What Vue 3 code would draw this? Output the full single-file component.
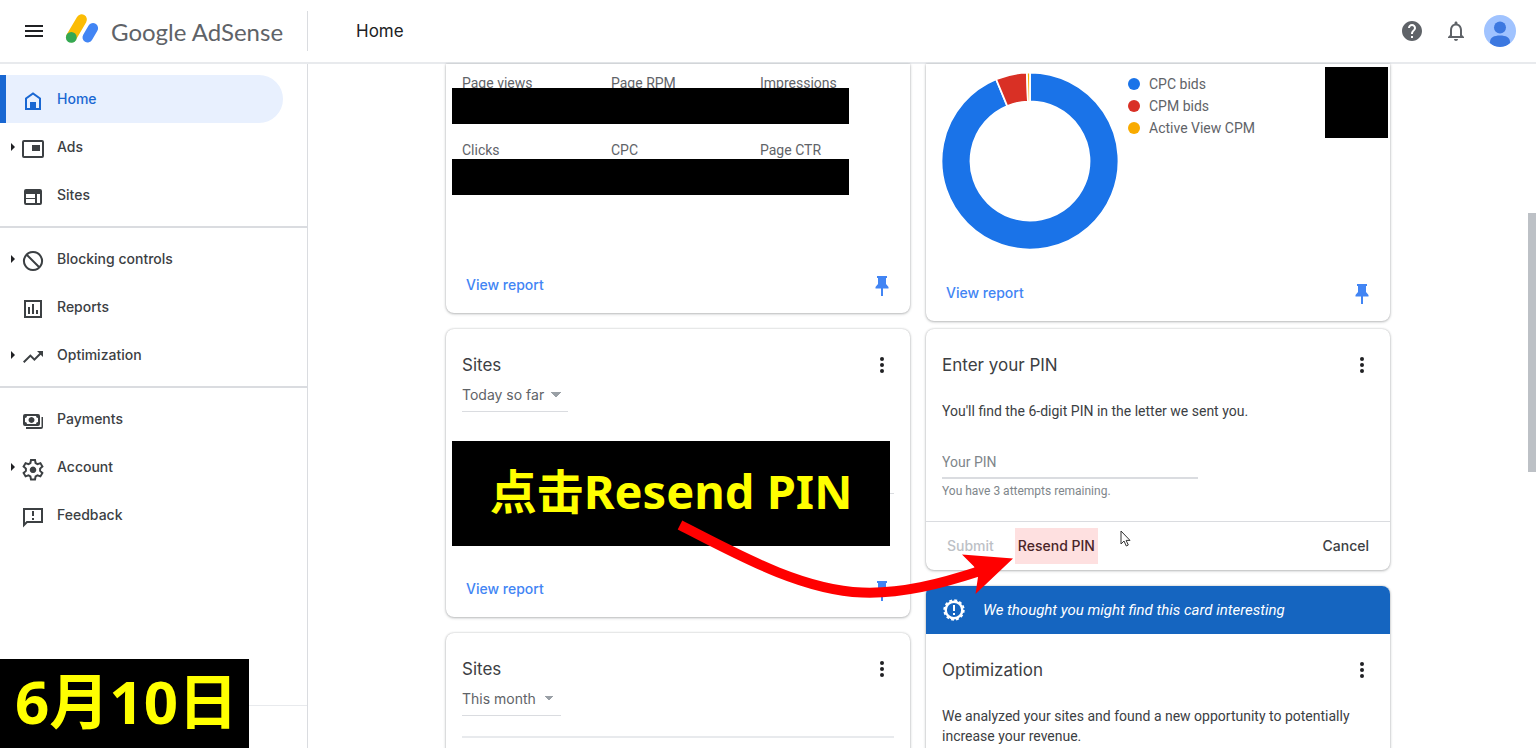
<template>
  <div class="app">
    <header class="topbar">
      <div class="brand">
        <button class="icon-btn" type="button" aria-label="Main menu">
          <svg width="24" height="24" viewBox="0 0 24 24">
            <path d="M3 6h18v2H3zm0 5h18v2H3zm0 5h18v2H3z" fill="#202124" />
          </svg>
        </button>
        <svg class="logo" width="34" height="32" viewBox="0 0 34 32">
          <path d="M5.400 22 15.600 4.600" stroke="#fbbc04" stroke-width="10.600" stroke-linecap="round" />
          <path d="M21.600 22.400 27 13.200" stroke="#4285f4" stroke-width="10.200" stroke-linecap="round" />
          <circle cx="5.300" cy="22.400" r="5.400" fill="#34a853" />
        </svg>
        <span class="brand-name">Google AdSense</span>
      </div>
      <h1>Home</h1>
      <div class="tools">
        <button class="icon-btn" type="button" aria-label="Help">
          <svg width="24" height="24" viewBox="0 0 24 24" fill="#5f6368">
            <path d="M12 2C6.480 2 2 6.480 2 12s4.480 10 10 10 10-4.480 10-10S17.520 2 12 2zm1 17h-2v-2h2v2zm2.070-7.750l-.9.920C13.450 12.900 13 13.500 13 15h-2v-.5c0-1.100.450-2.100 1.170-2.830l1.240-1.260c.370-.360.590-.860.590-1.410 0-1.100-.9-2-2-2s-2 .9-2 2H8c0-2.210 1.790-4 4-4s4 1.790 4 4c0 .880-.360 1.680-.930 2.250z" />
          </svg>
        </button>
        <button class="icon-btn bell" type="button" aria-label="Notifications">
          <svg width="24" height="24" viewBox="0 0 24 24" fill="#5f6368">
            <path d="M12 22c1.100 0 2-.9 2-2h-4c0 1.100.9 2 2 2zm6-6v-5c0-3.070-1.630-5.640-4.500-6.320V4c0-.830-.670-1.500-1.500-1.500s-1.500.670-1.500 1.500v.680C7.640 5.360 6 7.920 6 11v5l-2 2v1h16v-1l-2-2zm-2 1H8v-6c0-2.480 1.510-4.500 4-4.500s4 2.020 4 4.500v6z" />
          </svg>
        </button>
        <button class="icon-btn" type="button" aria-label="Profile">
          <svg width="32" height="32" viewBox="0 0 32 32">
            <clipPath id="face"><circle cx="16" cy="16" r="16" /></clipPath>
            <g clip-path="url(#face)">
              <rect width="32" height="32" fill="#a0c3ff" />
              <circle cx="16" cy="12.500" r="6" fill="#3c78e0" />
              <path d="M6 27c0-4.500 4-6.500 10-6.500S26 22.500 26 27v1c-3 3-6 4-10 4s-7-1-10-4z" fill="#3c78e0" />
            </g>
          </svg>
        </button>
      </div>
    </header>

    <div class="body">
      <nav class="sidebar">
        <ul v-for="(group, i) in menu" :key="i">
          <li v-for="item in group" :key="item.label">
            <a href="#" :class="['nav-item', { active: item.active }]">
              <span class="arrow"><i v-if="item.nested"></i></span>
              <svg class="nav-icon" width="24" height="24" viewBox="0 0 24 24">
                <path v-if="item.fill" :d="item.fill" fill="currentColor" fill-rule="evenodd" />
                <path v-if="item.line" :d="item.line" fill="none" stroke="currentColor" stroke-width="2" />
              </svg>
              <span class="nav-label">{{ item.label }}</span>
            </a>
          </li>
        </ul>
        <div class="sidebar-foot"></div>
        <div class="date-tag">6月10日</div>
      </nav>

      <main class="content">
        <div class="board">
          <div class="column">
            <section class="card cut first">
              <div v-for="(row, i) in stats" :key="i" class="stat-row">
                <span v-for="name in row" :key="name">{{ name }}</span>
                <div class="redacted"></div>
              </div>
              <div class="card-foot">
                <a href="#">View report</a>
                <svg class="pin" width="24" height="24" viewBox="0 0 24 24"><path :d="pinPath" /></svg>
              </div>
            </section>

            <section class="card sites">
              <div class="card-head">
                <h2>Sites</h2>
                <button class="more" type="button" aria-label="More options"><i></i><i></i><i></i></button>
              </div>
              <label class="range">
                <select aria-label="Date range" class="today"><option>Today so far</option></select>
              </label>
              <div class="callout-row">
                <div class="callout">点击Resend PIN</div>
              </div>
              <div class="card-foot">
                <a href="#">View report</a>
                <svg class="pin" width="24" height="24" viewBox="0 0 24 24"><path :d="pinPath" /></svg>
              </div>
            </section>

            <section class="card sites">
              <div class="card-head">
                <h2>Sites</h2>
                <button class="more" type="button" aria-label="More options"><i></i><i></i><i></i></button>
              </div>
              <label class="range">
                <select aria-label="Date range" class="month"><option>This month</option></select>
              </label>
              <hr />
            </section>
          </div>

          <div class="column">
            <section class="card cut bids">
              <div class="bids-body">
                <svg width="178" height="178" viewBox="-89 -89 178 178">
                  <path
                    v-for="s in slices"
                    :key="s.color"
                    :d="arc(s.from, s.to)"
                    :fill="s.color"
                    stroke="#fff"
                    stroke-width="1.800"
                  />
                </svg>
                <ul class="legend">
                  <li v-for="s in slices" :key="s.label">
                    <svg width="12" height="12"><circle cx="6" cy="6" r="6" :fill="s.color" /></svg>
                    {{ s.label }}
                  </li>
                </ul>
                <div class="redacted-box"></div>
              </div>
              <div class="card-foot">
                <a href="#">View report</a>
                <svg class="pin" width="24" height="24" viewBox="0 0 24 24"><path :d="pinPath" /></svg>
              </div>
            </section>

            <form class="card pin-card" @submit.prevent>
              <div class="card-head">
                <h2>Enter your PIN</h2>
                <button class="more" type="button" aria-label="More options"><i></i><i></i><i></i></button>
              </div>
              <p class="text">You'll find the 6-digit PIN in the letter we sent you.</p>
              <input v-model="pin" type="text" placeholder="Your PIN" aria-label="Your PIN" />
              <p class="hint">You have 3 attempts remaining.</p>
              <div class="actions">
                <button type="submit" :disabled="!pin">Submit</button>
                <button type="button" class="marked">Resend PIN</button>
                <button type="button" class="cancel">Cancel</button>
              </div>
            </form>

            <section class="card tip">
              <div class="banner">
                <svg width="24" height="24" viewBox="0 0 24 24" fill="none" stroke="#fff">
                  <circle cx="12" cy="12" r="8.300" stroke-width="2.400" />
                  <circle cx="12" cy="12" r="9.800" stroke-width="1.800" stroke-dasharray="2.900 2.231" />
                  <path d="M12 7v6m0 2v2" stroke-width="2" />
                </svg>
                <em>We thought you might find this card interesting</em>
              </div>
              <div class="card-head">
                <h2>Optimization</h2>
                <button class="more" type="button" aria-label="More options"><i></i><i></i><i></i></button>
              </div>
              <p class="text">
                We analyzed your sites and found a new opportunity to potentially increase your revenue.
              </p>
            </section>
          </div>

          <!-- hand-drawn arrow from the callout to the button -->
          <svg class="pointer-arrow" width="340" height="80" viewBox="676 518 340 80">
            <path
              d="M680 525C735 553 800 590 862 592.500C902 594 940 584 980 571"
              fill="none"
              stroke="#f00"
              stroke-width="10"
            />
            <path d="M1013 558.500 962 554.500 974 566.500 978 577 975.500 594z" fill="#f00" />
          </svg>
          <svg class="cursor" width="12" height="18" viewBox="0 0 12 18">
            <path d="M1 1v13l3-3 2.300 5 2-1-2.200-4.600H10z" fill="#fff" stroke="#333" />
          </svg>
        </div>
      </main>
      <div class="scrollbar"><div class="thumb"></div></div>
    </div>
  </div>
</template>

<script setup>
import { ref } from 'vue'

const pin = ref('')

const menu = [
  [
    {
      label: 'Home',
      active: true,
      line: 'M5 20V9.500l7-5 7 5V20z',
      fill: 'M9 13h6v7H9z',
    },
    {
      label: 'Ads',
      nested: true,
      line: 'M3 4h18q1 0 1 1v14q0 1-1 1H3q-1 0-1-1V5q0-1 1-1z',
      fill: 'M11 8h8v6h-8z',
    },
    {
      label: 'Sites',
      fill: 'M5 4h14q2 0 2 2v12q0 2-2 2H5q-2 0-2-2V6q0-2 2-2zM5 9v4h9V9zm0 5v4h9v-4zm11-5v9h3V9z',
    },
  ],
  [
    {
      label: 'Blocking controls',
      nested: true,
      line: 'M12 3a9 9 0 1 0 .01 0zM5.500 5.500l13 13',
    },
    {
      label: 'Reports',
      line: 'M4 4h16v16H4z',
      fill: 'M7 10h2v7H7zm4-3h2v10h-2zm4 6h2v4h-2z',
    },
    {
      label: 'Optimization',
      nested: true,
      fill: 'm16 6 2.290 2.290-4.880 4.880-4-4L2 16.590 3.410 18l6-6 4 4 6.300-6.290L22 12V6z',
    },
  ],
  [
    {
      label: 'Payments',
      fill: 'M4 5h13q2 0 2 2v8q0 2-2 2H4q-2 0-2-2V7q0-2 2-2zM6 7q0 2-2 2v4q2 0 2 2h9q0-2 2-2V9q-2 0-2-2zM10.500 8a3 3 0 1 0 .01 0zM20.500 8H22v10q0 2-2 2H5v-2h15.500z',
    },
    {
      label: 'Account',
      nested: true,
      line: 'M10 3h4l.6 3 1.900 1.100 2.900-1 2 3.500-2.300 2v2.300l2.300 2-2 3.500-2.900-1-1.900 1.100-.6 3h-4l-.6-3-1.900-1.100-2.900 1-2-3.500 2.300-2v-2.300l-2.300-2 2-3.500 2.900 1L9.400 6z',
      fill: 'M12 9.500a3.300 3.300 0 1 0 .01 0z',
    },
    {
      label: 'Feedback',
      line: 'M3 20V4h18v13H6z',
      fill: 'M11 6h2v5h-2zm0 7h2v2h-2z',
    },
  ],
]

const stats = [
  ['Page views', 'Page RPM', 'Impressions'],
  ['Clicks', 'CPC', 'Page CTR'],
]

// angles in degrees, clockwise from the top
const slices = [
  { label: 'CPC bids', color: '#1a73e8', from: 0, to: 337.5 },
  { label: 'CPM bids', color: '#d93025', from: 337.5, to: 358 },
  { label: 'Active View CPM', color: '#f9ab00', from: 358, to: 360 },
]

const pinPath = 'M7 2h10v2h-1v6l2.500 3v1.500H13V22h-2v-7.500H5.500V13L8 10V4H7z'

function point(radius, deg) {
  const a = (deg * Math.PI) / 180
  return `${(radius * Math.sin(a)).toFixed(2)} ${(-radius * Math.cos(a)).toFixed(2)}`
}

function arc(from, to) {
  const large = to - from > 180 ? 1 : 0
  return `M${point(88.5, from)}A88.5 88.5 0 ${large} 1 ${point(88.5, to)}L${point(59.5, to)}A59.5 59.5 0 ${large} 0 ${point(59.5, from)}z`
}
</script>

<style>
body {
  margin: 0;
}
</style>

<style scoped>
.app {
  display: flex;
  flex-direction: column;
  height: 100vh;
  overflow: hidden;
  background: #fff;
  color: #3c4043;
  font-family: Roboto, "Noto Sans CJK SC", sans-serif;
  font-size: 14px;
}

h1,
h2,
p,
ul {
  margin: 0;
  padding: 0;
  list-style: none;
}

button {
  border: none;
  background: none;
  padding: 0;
  cursor: pointer;
}

.topbar {
  display: flex;
  align-items: center;
  flex: none;
  box-sizing: border-box;
  height: 64px;
  padding-bottom: 1px;
  border-bottom: 2px solid #e8eaed;
}

.brand {
  display: flex;
  align-items: center;
  box-sizing: border-box;
  width: 308px;
  height: 40px;
  padding-left: 22px;
  border-right: 1px solid #dadce0;
}

.icon-btn {
  display: flex;
}

.logo {
  margin: 0 11px 0 20px;
  fill: none;
  overflow: visible;
}

.brand-name {
  padding-top: 2px;
  font-family: Lato, sans-serif;
  font-size: 24px;
  line-height: 32px;
  color: #5f6368;
  white-space: nowrap;
}

h1 {
  margin-left: 48px;
  font-family: Inter, sans-serif;
  font-size: 17px;
  font-weight: 400;
  color: #202124;
}

.tools {
  display: flex;
  align-items: center;
  gap: 20px;
  margin-left: auto;
  padding-right: 20px;
}

.bell {
  margin-right: -4px;
}

.body {
  display: flex;
  flex: 1;
  min-height: 0;
}

.sidebar {
  position: relative;
  display: flex;
  flex-direction: column;
  flex: none;
  box-sizing: border-box;
  width: 308px;
  padding-top: 11px;
  border-right: 1px solid #dadce0;
}

.sidebar ul + ul {
  margin-top: 7px;
  padding-top: 7px;
  border-top: 2px solid #dadce0;
}

.nav-item {
  display: flex;
  align-items: center;
  box-sizing: border-box;
  width: 283px;
  height: 48px;
  padding-left: 11px;
  color: #3c4043;
  font-family: Inter, sans-serif;
  font-weight: 500;
  text-decoration: none;
}

.nav-item.active {
  padding-left: 5px;
  border-left: 6px solid #1967d2;
  border-radius: 0 24px 24px 0;
  background: #e8f0fe;
  color: #1967d2;
}

.nav-label {
  padding-bottom: 2px;
}

.arrow {
  width: 10px;
}

.arrow i {
  display: block;
  width: 0;
  border: 4px solid transparent;
  border-left-color: #202124;
  border-right: none;
}

.nav-icon {
  margin-right: 12px;
  padding-top: 3px;
}

.sidebar-foot {
  margin-top: auto;
  height: 42px;
  border-top: 1px solid #e8eaed;
}

.date-tag {
  position: absolute;
  left: 0;
  bottom: 0;
  box-sizing: border-box;
  width: 249px;
  padding: 0 0 5px 15px;
  background: #000;
  color: #ff0;
  font-family: "Noto Sans", "Noto Sans CJK SC", sans-serif;
  font-size: 60px;
  font-weight: 700;
  line-height: 84px;
  white-space: nowrap;
}

.content {
  flex: 1;
  min-width: 0;
}

.board {
  position: relative;
  display: flex;
  gap: 16px;
  max-width: 944px;
  margin: 0 auto;
}

.column {
  flex: 1;
  min-width: 0;
  display: flex;
  flex-direction: column;
  gap: 16px;
}

.card {
  border-radius: 8px;
  background: #fff;
  box-shadow: 0 0 2px rgba(60, 64, 67, 0.3), 0 1px 3px rgba(60, 64, 67, 0.3);
  overflow: hidden;
}

.card.cut {
  display: flex;
  flex-direction: column;
  box-sizing: border-box;
  border-radius: 0 0 8px 8px;
}

.first {
  height: 249px;
  padding-top: 9px;
}

.stat-row {
  position: relative;
  display: grid;
  grid-template-columns: repeat(3, 149px);
  height: 67px;
  padding-left: 16px;
  color: #5f6368;
  line-height: 20px;
}

.redacted {
  position: absolute;
  left: 6px;
  top: 15px;
  width: 397px;
  height: 36px;
  background: #000;
}

.stat-row + .stat-row .redacted {
  top: 19px;
}

.card-foot {
  display: flex;
  align-items: center;
  justify-content: space-between;
  height: 56px;
  margin-top: auto;
  padding: 0 16px 0 20px;
}

.card-foot a {
  padding-bottom: 2px;
  color: #4285f4;
  font-family: Inter, sans-serif;
  font-weight: 500;
  text-decoration: none;
}

.pin {
  padding-top: 2px;
  fill: #4285f4;
}

.card-head {
  display: flex;
  align-items: center;
  justify-content: space-between;
  height: 40px;
  padding: 16px 16px 0;
}

h2 {
  font-family: Inter, sans-serif;
  font-size: 17px;
  font-weight: 400;
}

.more {
  display: flex;
  flex-direction: column;
  align-items: center;
  gap: 2px;
  width: 24px;
}

.more i {
  width: 4px;
  height: 4px;
  border-radius: 50%;
  background: #202124;
}

.range {
  display: flex;
  padding-left: 16px;
}

.range select {
  appearance: none;
  height: 27px;
  padding: 0 0 8px;
  border: none;
  border-bottom: 1px solid #dadce0;
  border-radius: 0;
  background: no-repeat right 7px top 7px / 10px 5px
    conic-gradient(from 315deg at 50% 100%, #9aa0a6 90deg, transparent 0);
  color: #5f6368;
  font-family: Inter, sans-serif;
  font-size: 14px;
}

.today {
  width: 106px;
}

.month {
  width: 99px;
}

.callout-row {
  display: flex;
  align-items: center;
  margin-top: 29px;
  padding-left: 6px;
}

.callout-row::after {
  content: "";
  width: 4px;
  height: 1px;
  background: #dadce0;
}

.callout {
  width: 438px;
  padding-bottom: 5px;
  background: #000;
  color: #ff0;
  font-family: "Noto Sans", "Noto Sans CJK SC", sans-serif;
  font-size: 47px;
  font-weight: 700;
  line-height: 100px;
  text-align: center;
  white-space: nowrap;
}

.sites .card-foot {
  height: 55px;
  padding-top: 16px;
}

hr {
  height: 2px;
  margin: 20px 16px 80px;
  border: none;
  background: #e8eaed;
}

.bids {
  height: 257px;
  margin-bottom: -8px;
  padding-top: 3px;
}

.bids-body {
  display: flex;
  align-items: flex-start;
  padding: 0 2px 0 15px;
}

.bids-body > svg {
  margin-top: 5px;
}

.legend {
  margin: 6px 0 0 9px;
  color: #5f6368;
  line-height: 22px;
}

.legend li {
  display: flex;
  align-items: center;
  gap: 9px;
}

.redacted-box {
  width: 63px;
  height: 71px;
  margin-left: auto;
  background: #000;
}

.text {
  padding: 0 16px;
  line-height: 20px;
}

.pin-card .text {
  margin-top: 16px;
}

.pin-card input {
  display: block;
  box-sizing: border-box;
  width: 256px;
  height: 36px;
  margin: 22px 16px 0;
  padding: 4px 0 0;
  border: none;
  border-bottom: 2px solid #dadce0;
  color: #3c4043;
  font-family: inherit;
  font-size: 14px;
}

.pin-card input::placeholder {
  color: #80868b;
}

.hint {
  padding: 4px 16px 22px;
  color: #80868b;
  font-size: 12px;
  line-height: 16px;
}

.actions {
  display: flex;
  align-items: center;
  height: 48px;
  padding: 0 21px;
  border-top: 1px solid #dadce0;
}

.actions button {
  padding-bottom: 2px;
  color: #3c4043;
  font-family: Inter, sans-serif;
  font-size: 14px;
  font-weight: 500;
}

.actions button:disabled {
  color: #bdc1c6;
}

.actions .marked {
  height: 36px;
  margin-left: 21px;
  padding: 0 3px 2px;
  background: #fee0e0;
  color: #4a2528;
}

.actions .cancel {
  margin-left: auto;
}

.banner {
  display: flex;
  align-items: center;
  gap: 17px;
  height: 48px;
  padding-left: 16px;
  background: #1565c0;
  color: #fff;
  font-size: 15px;
}

.tip .text {
  margin: 16px 0 20px;
}

.pointer-arrow {
  position: absolute;
  left: 230px;
  top: 454px;
}

.cursor {
  position: absolute;
  left: 674px;
  top: 466px;
}

.scrollbar {
  flex: none;
  width: 8px;
}

.thumb {
  height: 259px;
  margin-top: 149px;
  background: #bdc1c6;
}
</style>
